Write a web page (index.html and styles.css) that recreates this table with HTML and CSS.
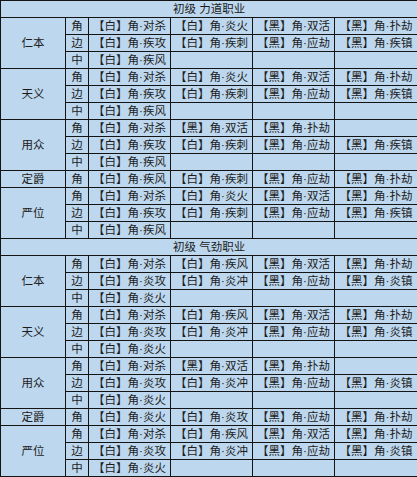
FILE: index.html
```html
<!DOCTYPE html>
<html lang="zh-CN">
<head>
<meta charset="utf-8">
<title>初级职业</title>
<link rel="stylesheet" href="styles.css">
</head>
<body>
<table class="grid">
<colgroup>
<col class="c-name"><col class="c-pos"><col class="c-skill"><col class="c-skill"><col class="c-skill"><col class="c-last">
</colgroup>
<tbody>
<tr><td class="head" colspan="6">初级 力道职业</td></tr>

<tr><td class="name" rowspan="3">仁本</td><td>角</td><td>【白】角·对杀</td><td>【白】角·炎火</td><td>【黑】角·双活</td><td>【黑】角·扑劫</td></tr>
<tr><td>边</td><td>【白】角·疾攻</td><td>【白】角·疾刺</td><td>【黑】角·应劫</td><td>【黑】角·疾镇</td></tr>
<tr><td>中</td><td>【白】角·疾风</td><td></td><td></td><td></td></tr>

<tr><td class="name" rowspan="3">天义</td><td>角</td><td>【白】角·对杀</td><td>【白】角·炎火</td><td>【黑】角·双活</td><td>【黑】角·扑劫</td></tr>
<tr><td>边</td><td>【白】角·疾攻</td><td>【白】角·疾刺</td><td>【黑】角·应劫</td><td>【黑】角·疾镇</td></tr>
<tr><td>中</td><td>【白】角·疾风</td><td></td><td></td><td></td></tr>

<tr><td class="name" rowspan="3">用众</td><td>角</td><td>【白】角·对杀</td><td>【黑】角·双活</td><td>【黑】角·扑劫</td><td></td></tr>
<tr><td>边</td><td>【白】角·疾攻</td><td>【白】角·疾刺</td><td>【黑】角·应劫</td><td>【黑】角·疾镇</td></tr>
<tr><td>中</td><td>【白】角·疾风</td><td></td><td></td><td></td></tr>

<tr><td class="name">定爵</td><td>角</td><td>【白】角·疾风</td><td>【白】角·疾刺</td><td>【黑】角·应劫</td><td>【黑】角·扑劫</td></tr>

<tr><td class="name" rowspan="3">严位</td><td>角</td><td>【白】角·对杀</td><td>【白】角·炎火</td><td>【黑】角·双活</td><td>【黑】角·扑劫</td></tr>
<tr><td>边</td><td>【白】角·疾攻</td><td>【白】角·疾刺</td><td>【黑】角·应劫</td><td>【黑】角·疾镇</td></tr>
<tr><td>中</td><td>【白】角·疾风</td><td></td><td></td><td></td></tr>

<tr><td class="head" colspan="6">初级 气劲职业</td></tr>

<tr><td class="name" rowspan="3">仁本</td><td>角</td><td>【白】角·对杀</td><td>【白】角·疾风</td><td>【黑】角·双活</td><td>【黑】角·扑劫</td></tr>
<tr><td>边</td><td>【白】角·炎攻</td><td>【白】角·炎冲</td><td>【黑】角·应劫</td><td>【黑】角·炎镇</td></tr>
<tr><td>中</td><td>【白】角·炎火</td><td></td><td></td><td></td></tr>

<tr><td class="name" rowspan="3">天义</td><td>角</td><td>【白】角·对杀</td><td>【白】角·疾风</td><td>【黑】角·双活</td><td>【黑】角·扑劫</td></tr>
<tr><td>边</td><td>【白】角·炎攻</td><td>【白】角·炎冲</td><td>【黑】角·应劫</td><td>【黑】角·炎镇</td></tr>
<tr><td>中</td><td>【白】角·炎火</td><td></td><td></td><td></td></tr>

<tr><td class="name" rowspan="3">用众</td><td>角</td><td>【白】角·对杀</td><td>【黑】角·双活</td><td>【黑】角·扑劫</td><td></td></tr>
<tr><td>边</td><td>【白】角·炎攻</td><td>【白】角·炎冲</td><td>【黑】角·应劫</td><td>【黑】角·炎镇</td></tr>
<tr><td>中</td><td>【白】角·炎火</td><td></td><td></td><td></td></tr>

<tr><td class="name">定爵</td><td>角</td><td>【白】角·炎火</td><td>【白】角·炎攻</td><td>【黑】角·应劫</td><td>【黑】角·扑劫</td></tr>

<tr><td class="name" rowspan="3">严位</td><td>角</td><td>【白】角·对杀</td><td>【白】角·疾风</td><td>【黑】角·双活</td><td>【黑】角·扑劫</td></tr>
<tr><td>边</td><td>【白】角·炎攻</td><td>【白】角·炎冲</td><td>【黑】角·应劫</td><td>【黑】角·炎镇</td></tr>
<tr><td>中</td><td>【白】角·炎火</td><td></td><td></td><td></td></tr>
</tbody>
</table>
</body>
</html>
```

FILE: styles.css
```css
html, body {
  margin: 0;
  padding: 0;
  background: #bdd7ee;
}

.grid {
  border-collapse: collapse;
  table-layout: fixed;
  width: 417px;
  background: #bdd7ee;
  font-family: "Liberation Sans", "Noto Sans CJK SC", sans-serif;
  font-size: 11.5px;
  color: #1c1c1c;
}

.c-name { width: 65px; }
.c-pos { width: 23px; }
.c-skill { width: 82px; }
.c-last { width: 83px; }

.grid td {
  border: 1px solid #141414;
  height: 16px;
  padding: 0;
  line-height: 16px;
  text-align: center;
  vertical-align: middle;
  white-space: nowrap;
  overflow: hidden;
}

.grid td.head {
  text-align: center;
}
```
